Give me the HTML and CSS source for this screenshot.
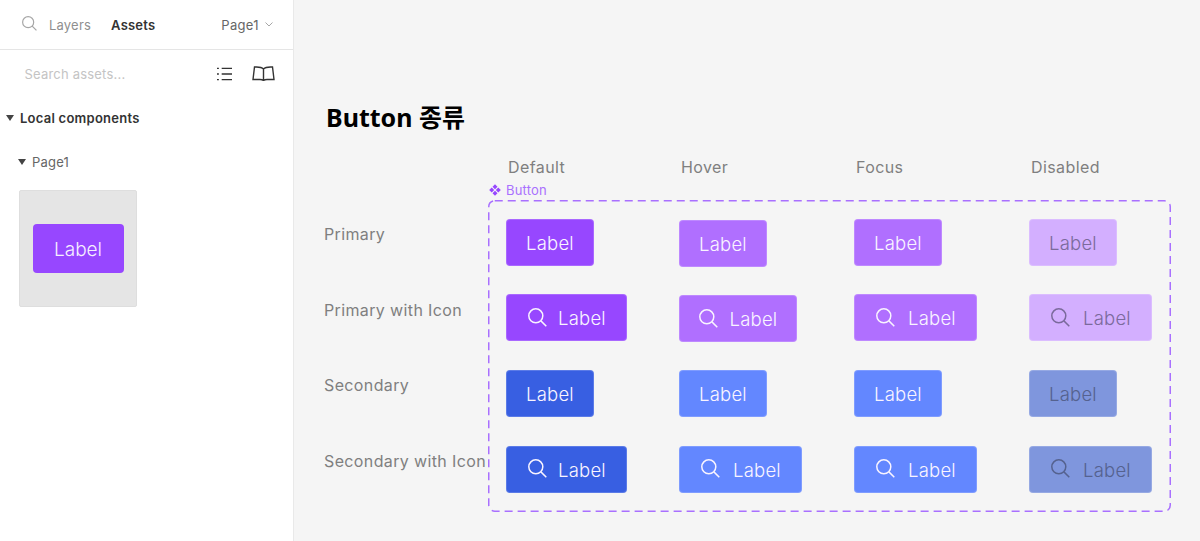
FILE: index.html
```html
<!DOCTYPE html>
<html lang="ko">
<head>
<meta charset="utf-8">
<title>Button 종류</title>
<link rel="stylesheet" href="styles.css">
</head>
<body>
<svg class="defs" width="0" height="0" aria-hidden="true">
  <symbol id="search" viewBox="0 0 19 19">
    <circle cx="7.8" cy="7.8" r="7" fill="none" stroke="currentColor" stroke-width="1.5"/>
    <path d="M12.900 12.900L18.300 18.300" fill="none" stroke="currentColor" stroke-width="1.5"/>
  </symbol>
</svg>
<div class="app">
  <aside class="sidebar">
    <header class="tabs">
      <svg class="tab-search"><use href="#search"/></svg>
      <span class="tab">Layers</span>
      <span class="tab tab-active">Assets</span>
      <span class="page-select">Page1
        <svg class="chevron" viewBox="0 0 8 5"><path d="M.5.5L4 4 7.5.5" fill="none" stroke="currentColor"/></svg>
      </span>
    </header>
    <div class="search-row">
      <span class="placeholder">Search assets...</span>
      <svg class="list-icon" viewBox="0 0 16 14"><path d="M0 1h2M5 1h11M0 7h2M5 7h11M0 13h2M5 13h11" fill="none" stroke="currentColor" stroke-width="1.4"/></svg>
      <svg class="book-icon" viewBox="0 0 23 15"><path d="M11.5 3C10 1.500 7.500 1 4.500 1H2.500L1 13.500H8C9.500 13.500 10.500 13.700 11.500 14.500C12.500 13.700 13.500 13.500 15 13.500H22L20.500 1H18.500C15.500 1 13 1.500 11.500 3ZM11.500 3V14.500" fill="none" stroke="currentColor" stroke-width="1.4"/></svg>
    </div>
    <div class="section-title"><i class="tri"></i>Local components</div>
    <div class="page-title"><i class="tri"></i>Page1</div>
    <div class="thumb"><span class="thumb-btn">Label</span></div>
  </aside>
  <main class="canvas">
    <h1 class="title">Button 종류</h1>
    <div class="states">
      <span class="state s1">Default</span>
      <span class="state">Hover</span>
      <span class="state">Focus</span>
      <span class="state">Disabled</span>
    </div>
    <div class="board">
      <div class="row-labels">
        <span>Primary</span>
        <span>Primary with Icon</span>
        <span>Secondary</span>
        <span>Secondary with Icon</span>
      </div>
      <div class="frame">
        <span class="frame-tag">
          <svg viewBox="0 0 12 12"><path d="M6 .2l2.500 2.500L6 5.200 3.500 2.700zM2.700 3.500L5.200 6 2.700 8.500 .2 6zM9.300 3.500L11.800 6 9.300 8.500 6.800 6zM6 6.800l2.500 2.500L6 11.800 3.500 9.300z" fill="currentColor"/></svg>
          Button
        </span>
        <svg class="dash" viewBox="0 0 683 312"><rect x=".75" y=".75" width="681.500" height="310.500" rx="6" fill="none" stroke="#a970ff" stroke-width="1.500" stroke-dasharray="8 5"/></svg>
        <div class="matrix">
          <a class="btn p">Label</a>
          <a class="btn ph low">Label</a>
          <a class="btn ph">Label</a>
          <a class="btn pd">Label</a>

          <a class="btn p wide"><svg class="ico"><use href="#search"/></svg>Label</a>
          <a class="btn ph low w118"><svg class="ico"><use href="#search"/></svg>Label</a>
          <a class="btn ph w123"><svg class="ico"><use href="#search"/></svg>Label</a>
          <a class="btn pd w123"><svg class="ico"><use href="#search"/></svg>Label</a>

          <a class="btn s">Label</a>
          <a class="btn sh">Label</a>
          <a class="btn sh">Label</a>
          <a class="btn sd">Label</a>

          <a class="btn s wide"><svg class="ico"><use href="#search"/></svg>Label</a>
          <a class="btn sh w123"><svg class="ico"><use href="#search"/></svg>Label</a>
          <a class="btn sh w123"><svg class="ico"><use href="#search"/></svg>Label</a>
          <a class="btn sd w123"><svg class="ico"><use href="#search"/></svg>Label</a>
        </div>
      </div>
    </div>
  </main>
</div>
</body>
</html>
```
FILE: styles.css
```css
* { box-sizing: border-box; }
html, body { margin: 0; height: 100%; overflow: hidden; }
body { font-family: Inter, "Noto Sans", sans-serif; background: #f5f5f5; color: #333; }
.defs { position: absolute; }
.app { display: flex; height: 541px; }

.sidebar { width: 294px; flex: none; background: #fff; border-right: 1px solid #e9e9e9; }
.tabs { height: 50px; border-bottom: 1px solid #e5e5e5; display: flex; align-items: center; padding-left: 22px; font-size: 13px; letter-spacing: .2px; }
.tab-search { width: 15px; height: 15px; color: #a6a6a6; margin: -2px 12px 0 0; }
.tab { color: #8f8f8f; margin-right: 20px; }
.tab-active { color: #333; font-weight: 600; }
.page-select { margin-left: auto; margin-right: 20px; color: #666; display: flex; align-items: center; gap: 6px; letter-spacing: .35px; }
.chevron { width: 8px; height: 5px; color: #a6a6a6; }
.search-row { height: 47px; display: flex; align-items: center; padding-left: 24.500px; }
.placeholder { font-size: 13px; letter-spacing: .2px; color: #c4c4c4; margin-right: auto; }
.list-icon { width: 15px; height: 14px; color: #333; margin-right: 20px; }
.book-icon { width: 23px; height: 15px; color: #333; margin-right: 18px; }
.tri { width: 0; height: 0; border: 4px solid transparent; border-top: 6px solid #444; border-bottom: 0; }
.section-title { margin-top: 12px; height: 18px; display: flex; align-items: center; gap: 6px; padding-left: 6px; font-size: 13px; font-weight: 600; color: #333; letter-spacing: .25px; }
.page-title { margin-top: 26px; height: 18px; display: flex; align-items: center; gap: 6px; padding-left: 18px; font-size: 13px; color: #666; letter-spacing: .2px; }
.thumb { margin: 19px 0 0 19px; width: 118px; height: 117px; background: #e5e5e5; border: 1px solid #dedede; border-radius: 2px; display: flex; align-items: center; justify-content: center; }
.thumb-btn { width: 91px; height: 49px; border-radius: 4px; background: #9747ff; color: #f6efff; font-size: 19px; font-weight: 300; display: flex; align-items: center; justify-content: center; padding-top: 1px; }

.canvas { flex: 1; padding: 100px 0 0 30px; min-width: 0; }
.title { margin: 0 0 0 2px; height: 34px; font: 700 25px/34px "Noto Sans", "Noto Sans CJK KR", sans-serif; color: #000; }
.states { display: flex; margin: 21px 0 0 184px; height: 24px; font-size: 16px; line-height: 24px; color: #7f7f7f; letter-spacing: .4px; }
.state { width: 175px; flex: none; }
.s1 { width: 173px; }
.board { display: flex; margin-top: 21px; }
.row-labels { width: 164px; flex: none; padding-top: 22px; display: grid; grid-auto-rows: 75.500px; font-size: 16px; line-height: 24px; color: #7f7f7f; letter-spacing: .37px; white-space: nowrap; }
.frame { position: relative; width: 683px; height: 312px; flex: none; padding: 18.700px 0 0 18px; }
.frame-tag { position: absolute; left: 1px; top: -18px; display: flex; align-items: center; gap: 5px; font-size: 13px; line-height: 16px; color: #a970ff; letter-spacing: .2px; }
.frame-tag svg { width: 12px; height: 12px; color: #9747ff; }
.dash { position: absolute; inset: 0; width: 683px; height: 312px; }
.matrix { display: grid; grid-template-columns: 173px 175px 175px 1fr; grid-auto-rows: 47px; row-gap: 28.700px; justify-items: start; }

.btn { width: 88px; height: 47px; border-radius: 4px; border: 1px solid rgba(255,255,255,.18); color: #f9f4ff; font-size: 18.500px; font-weight: 300; letter-spacing: .2px; padding-top: 1px; display: flex; align-items: center; justify-content: center; gap: 12px; }
.wide { width: 121px; gap: 11px; padding-left: 1px; }
.w118 { width: 118px; }
.w123 { width: 123px; gap: 13px; padding-left: 1px; }
.low { margin-top: 1px; }
.ico { width: 19px; height: 19px; margin-top: -2px; }
.p { background: #9747ff; }
.ph { background: #b06fff; }
.pd { background: #d3afff; color: #7b6a9c; }
.s { background: #385fe2; }
.sh { background: #6387ff; }
.sd { background: #7f96dd; color: #55628f; }
```
